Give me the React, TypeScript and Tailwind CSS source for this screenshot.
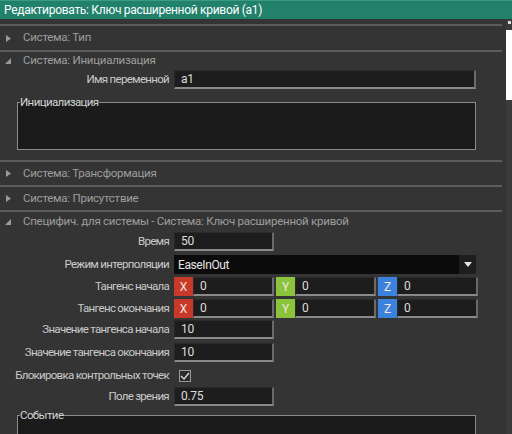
import React from "react";

const FONT = "font-['Roboto','Liberation_Sans',sans-serif]";

// Triangle marker for property group headers
const Arrow = ({ open }: { open: boolean }) =>
  open ? (
    <svg width="8" height="8" viewBox="0 0 8 8" className="shrink-0">
      <polygon points="7,1 7,7 1,7" fill="#9a9a9a" />
    </svg>
  ) : (
    <svg width="8" height="9" viewBox="0 0 8 9" className="shrink-0">
      <polygon points="2,1 7,4.5 2,8" fill="#9a9a9a" />
    </svg>
  );

const Header = ({ title, open, h }: { title: string; open?: boolean; h: string }) => (
  <div className={`border-t-2 border-[#5c5c5c] flex items-center pl-[4px] ${h}`}>
    <Arrow open={!!open} />
    <span className="ml-[11px] text-[#9e9e9e] text-[11.5px] leading-none tracking-[-0.25px]">{title}</span>
  </div>
);

const Label = ({ children }: { children: React.ReactNode }) => (
  <div className="w-[170px] shrink-0 text-right pr-[1px] text-[#cacaca] text-[11.5px] leading-none tracking-[-0.7px] whitespace-nowrap">
    {children}
  </div>
);

const Field = ({ value, w }: { value: string; w: string }) => (
  <div
    className={`${w} h-[19px] bg-[#1d1d1d] border-l border-t border-[#2a2a2a] border-b-2 border-r-2 border-b-[#8a8a8a] border-r-[#6a6a6a] flex items-center pl-[6px] text-[#dedede] text-[12px] tracking-[-0.3px]`}
  >
    {value}
  </div>
);

const Axis = ({ axis, color, value }: { axis: string; color: string; value: string }) => (
  <div className="flex w-[100px]">
    <div className={`w-[19px] h-[19px] ${color} flex items-center justify-center text-[12px] text-[#f1e4dc]`}>
      {axis}
    </div>
    <Field value={value} w="flex-1" />
  </div>
);

const Vector = () => (
  <div className="flex gap-[2px]">
    <Axis axis="X" color="bg-[#c73a29]" value="0" />
    <Axis axis="Y" color="bg-[#8bc43c]" value="0" />
    <Axis axis="Z" color="bg-[#3b82dc]" value="0" />
  </div>
);

const Row = ({ label, children, mt }: { label: string; children: React.ReactNode; mt: string }) => (
  <div className={`flex items-center gap-[4px] ${mt}`}>
    <Label>{label}</Label>
    {children}
  </div>
);

const Group = ({ title, h, mt }: { title: string; h: string; mt: string }) => (
  <fieldset className={`ml-[17px] w-[459px] ${h} ${mt} border border-[#8c8c8c] bg-[#1b1b1b] px-[2px] min-w-0`}>
    <legend className="text-[#d4d4d4] text-[11.5px] leading-none px-0 tracking-[-0.6px]">{title}</legend>
  </fieldset>
);

export default function App() {
  return (
    <div className={`w-[512px] h-[434px] overflow-hidden bg-[#343434] flex flex-col ${FONT}`}>
      <div className="h-[19px] shrink-0 bg-[#22816b] border-t border-[#3a9a84] flex items-center pl-[4px] text-white text-[12px] tracking-[-0.3px]">
        Редактировать: Ключ расширенной кривой (а1)
      </div>

      <div className="flex flex-1 min-h-0">
        <div className="flex-1 pt-[5px] pr-[4px]">
          <Header title="Система: Тип" h="h-[26px]" />
          <Header title="Система: Инициализация" open h="h-[20px]" />
          <Row label="Имя переменной" mt="mt-0">
            <Field value="a1" w="w-[302px]" />
          </Row>
          <Group title="Инициализация" h="h-[53px]" mt="mt-[8px]" />

          <div className="mt-[10px]" />
          <Header title="Система: Трансформация" h="h-[25px]" />
          <Header title="Система: Присутствие" h="h-[25px]" />
          <Header title="Специфич. для системы - Система: Ключ расширенной кривой" open h="h-[21px]" />

          <Row label="Время" mt="mt-[1px]">
            <Field value="50" w="w-[100px]" />
          </Row>
          <Row label="Режим интерполяции" mt="mt-[4px]">
            <div className="w-[302px] h-[19px] flex">
              <div className="flex-1 bg-[#0b0b0b] flex items-center pl-[4px] text-[#e6e6e6] text-[12px] tracking-[-0.4px]">EaseInOut</div>
              <div className="w-[17px] bg-[#1e1e1e] flex items-center justify-center">
                <svg width="8" height="5" viewBox="0 0 8 5">
                  <polygon points="0,0 8,0 4,5" fill="#e6e6e6" />
                </svg>
              </div>
            </div>
          </Row>
          <Row label="Тангенс начала" mt="mt-[3px]">
            <Vector />
          </Row>
          <Row label="Тангенс окончания" mt="mt-[3px]">
            <Vector />
          </Row>
          <Row label="Значение тангенса начала" mt="mt-[2px]">
            <Field value="10" w="w-[100px]" />
          </Row>
          <Row label="Значение тангенса окончания" mt="mt-[4px]">
            <Field value="10" w="w-[100px]" />
          </Row>
          <Row label="Блокировка контрольных точек" mt="mt-[3px]">
            <div className="h-[21px] flex items-center pl-[5px]">
              <div className="w-[12px] h-[12px] border border-[#9a9a9a] bg-[#2a2a2a] flex items-center justify-center">
                <svg width="10" height="8" viewBox="0 0 10 8">
                  <polyline points="1,4 4,7 9,1" fill="none" stroke="#d8d8d8" strokeWidth="1.4" />
                </svg>
              </div>
            </div>
          </Row>
          <Row label="Поле зрения" mt="mt-[1px]">
            <Field value="0.75" w="w-[100px]" />
          </Row>
          <Group title="Событие" h="h-[40px]" mt="mt-[4px]" />
        </div>

        {/* scrollbar */}
        <div className="w-[6px] shrink-0 bg-[#3b3b3b] flex flex-col items-center">
          <div className="mt-[2px] w-[3px] h-[3px] bg-[#dcdcdc]" />
          <div className="mt-[6px] w-[6px] h-[70px] bg-white" />
        </div>
      </div>
    </div>
  );
}
